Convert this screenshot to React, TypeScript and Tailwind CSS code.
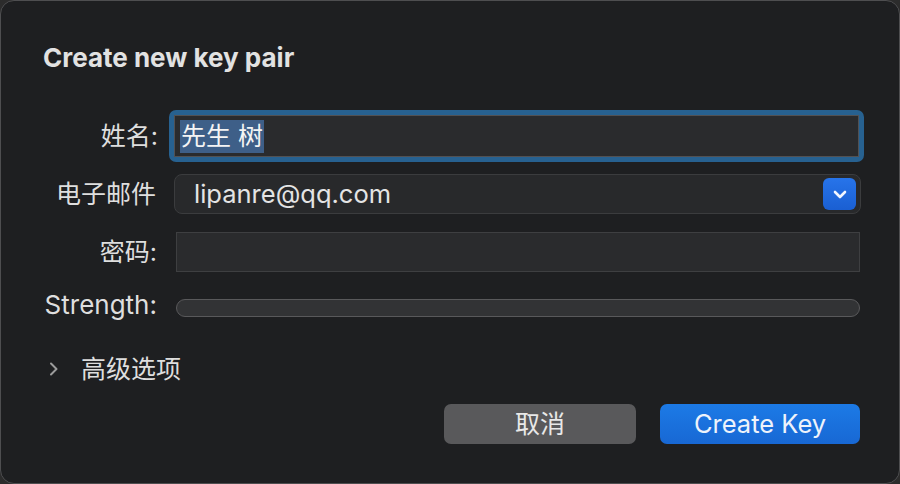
import React from "react";

export default function App() {
  const font = { fontFamily: 'Inter, "Noto Sans CJK SC", sans-serif' };

  return (
    <div className="w-[900px] h-[484px] bg-[#2c2c2c]" style={font}>
      <div className="w-full h-full rounded-[14px] border border-[#4e4e50] bg-[#1e1f21] flex flex-col text-[#dedede]">
        {/* Title */}
        <div className="pl-[42px] pt-[41px] h-[80px]">
          <h1 className="text-[26px] leading-[32px] font-bold text-[#e2e2e2]">Create new key pair</h1>
        </div>

        {/* Name */}
        <div className="flex items-center mt-[29px] h-[52px]">
          <div className="w-[157px] shrink-0 text-right text-[25px] leading-[30px]">姓名:</div>
          <div className="ml-[11px] w-[695px] h-[52px] rounded-[7px] bg-[#276190] p-[5px]">
            <div className="h-full bg-[#2a2b2d] border border-[#515153] flex items-center pl-[5px]">
              <span className="bg-[#3e5f88] text-[#f4f4f4] text-[25px] leading-[33px] px-[1px]">先生 树</span>
            </div>
          </div>
        </div>

        {/* Email */}
        <div className="flex items-center mt-[12px] h-[40px]">
          <div className="w-[155px] shrink-0 text-right text-[25px] leading-[30px]">电子邮件</div>
          <div className="ml-[18px] w-[687px] h-[40px] rounded-[8px] bg-[#28292b] border border-[#3b3c3e] flex items-center justify-between pl-[19px] pr-[4px]">
            <span className="text-[25.5px] leading-[30px] text-[#e4e4e4]">lipanre@qq.com</span>
            <div className="w-[33px] h-[32px] rounded-[6px] bg-gradient-to-b from-[#2774ea] to-[#1a5fd2] flex items-center justify-center">
              <svg width="14" height="9" viewBox="0 0 14 9" fill="none">
                <path d="M2 2l5 5 5-5" stroke="#f2f6ff" strokeWidth="2.6" strokeLinecap="round" strokeLinejoin="round" />
              </svg>
            </div>
          </div>
        </div>

        {/* Password */}
        <div className="flex items-center mt-[18px] h-[40px]">
          <div className="w-[156px] shrink-0 text-right text-[25px] leading-[30px]">密码:</div>
          <div className="ml-[19px] w-[684px] h-[40px] bg-[#2a2b2d] border border-[#3e3f41]" />
        </div>

        {/* Strength */}
        <div className="flex items-center mt-[22px] h-[28px]">
          <div className="w-[156px] shrink-0 text-right text-[26px] leading-[30px] -mt-[6px]">Strength:</div>
          <div className="ml-[19px] w-[684px] h-[18px] rounded-full bg-[#323335] border-[1.5px] border-[#59595b]" />
        </div>

        {/* Advanced options */}
        <div className="flex items-center mt-[32px] h-[30px] pl-[48px]">
          <svg width="10" height="14" viewBox="0 0 10 14" fill="none">
            <path d="M2 1.5l5.5 5.5L2 12.5" stroke="#9b9b9b" strokeWidth="2" strokeLinecap="round" strokeLinejoin="round" />
          </svg>
          <span className="ml-[22px] text-[25px] leading-[30px]">高级选项</span>
        </div>

        {/* Buttons */}
        <div className="flex justify-end gap-[24px] mt-[20px] pr-[39px]">
          <button className="w-[192px] h-[40px] rounded-[7px] bg-[#59595b] text-[25px] leading-[30px] text-[#e8e8e8]">取消</button>
          <button className="w-[200px] h-[40px] rounded-[7px] bg-gradient-to-b from-[#1c7ae6] to-[#1868d4] text-[25.5px] leading-[30px] text-[#eef3fb]">
            Create Key
          </button>
        </div>
      </div>
    </div>
  );
}
